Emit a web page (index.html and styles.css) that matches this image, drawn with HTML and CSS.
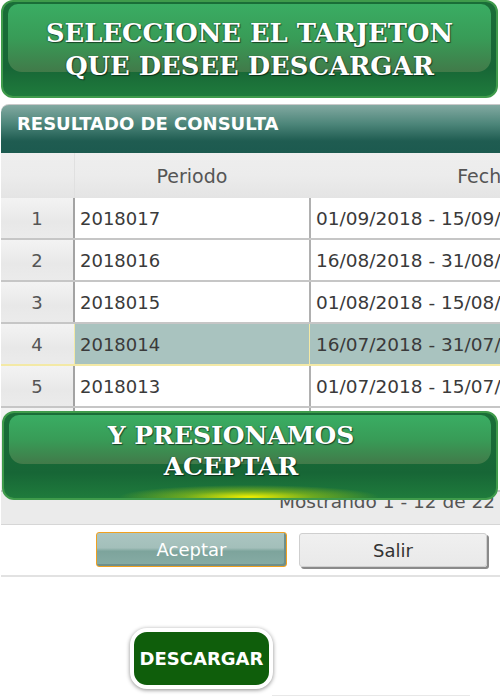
FILE: index.html
```html
<!DOCTYPE html>
<html lang="es">
<head>
<meta charset="utf-8">
<title>Tarjetón</title>
<link rel="stylesheet" href="styles.css">
</head>
<body>
<div class="page">
  <div class="gbanner top"><p>SELECCIONE EL TARJETON<br>QUE DESEE DESCARGAR</p></div>

  <section class="panel">
    <h1 class="panel-title">RESULTADO DE CONSULTA</h1>
    <div class="grid">
      <div class="row head"><div class="c num"></div><div class="c per">Periodo</div><div class="c fec">Fecha</div></div>
      <div class="row"><div class="c num">1</div><div class="c per">2018017</div><div class="c fec">01/09/2018 - 15/09/2018</div></div>
      <div class="row"><div class="c num">2</div><div class="c per">2018016</div><div class="c fec">16/08/2018 - 31/08/2018</div></div>
      <div class="row"><div class="c num">3</div><div class="c per">2018015</div><div class="c fec">01/08/2018 - 15/08/2018</div></div>
      <div class="row sel"><div class="c num">4</div><div class="c per">2018014</div><div class="c fec">16/07/2018 - 31/07/2018</div></div>
      <div class="row"><div class="c num">5</div><div class="c per">2018013</div><div class="c fec">01/07/2018 - 15/07/2018</div></div>
      <div class="row rest"><div class="c num"></div><div class="c per"></div><div class="c fec"></div></div>
    </div>
    <div class="pager">Mostrando 1 - 12 de 22</div>
    <div class="actions">
      <button class="btn ok">Aceptar</button>
      <button class="btn exit">Salir</button>
    </div>
  </section>

  <div class="dl-wrap"><button class="dl">DESCARGAR</button></div>
  <div class="rule"></div>

  <div class="gbanner overlay"><p>Y PRESIONAMOS<br>ACEPTAR</p></div>
</div>
</body>
</html>
```

FILE: styles.css
```css
html, body {
  margin: 0;
  padding: 0;
  background: #ffffff;
}
body {
  width: 500px;
  height: 700px;
  overflow: hidden;
  font-family: "DejaVu Sans", Roboto, sans-serif;
}
.page {
  position: relative;
  width: 500px;
  height: 700px;
  overflow: hidden;
}

/* green glossy banners */
.gbanner {
  position: relative;
  box-sizing: border-box;
  border: 2px solid #3f9b4b;
  border-radius: 12px;
  background: linear-gradient(#1a6e38, #176636 70%, #1f7b3c);
  overflow: hidden;
}
.gbanner::before {
  content: "";
  position: absolute;
  left: 5px;
  right: 5px;
  top: 2px;
  height: var(--gloss, 68px);
  border-radius: 10px 10px 14px 14px;
  background: linear-gradient(#3aad63, #389c57 50%, #417a49);
}
.gbanner p {
  position: relative;
  margin: 0;
  color: #ffffff;
  text-align: center;
  font-family: "DejaVu Serif", "Liberation Serif", serif;
  font-weight: bold;
  text-shadow: 1px 1px 1px rgba(0,0,0,0.55), -1px 0 1px rgba(0,0,0,0.25);
}
.gbanner.top {
  height: 98px;
  margin: 0 2px 0 1px;
  --gloss: 68px;
}
.gbanner.top p {
  padding-top: 15px;
  font-size: 25.8px;
  line-height: 33px;
}
.gbanner.overlay {
  position: absolute;
  top: 411px;
  left: 2px;
  width: 496px;
  height: 89px;
  --gloss: 49px;
  background:
    radial-gradient(ellipse 130px 12px at 245px 84px, rgba(240,240,0,1), rgba(200,225,0,0.45) 50%, rgba(30,120,50,0) 100%),
    linear-gradient(#1a6e38, #176636 70%, #1f7b3c);
}
.gbanner.overlay p {
  padding-top: 7px;
  padding-right: 38px;
  font-size: 25px;
  line-height: 31px;
}

/* result panel */
.panel {
  margin-top: 6px;
  margin-left: 1px;
}
.panel-title {
  margin: 0;
  height: 49px;
  box-sizing: border-box;
  border-top: 1px solid #c9c9c9;
  border-radius: 8px 0 0 0;
  padding: 7px 0 0 16px;
  background: linear-gradient(#82a9a1, #4c8579 40%, #1f5c51 75%, #1c5a4f);
  color: #ffffff;
  font-size: 18px;
  font-weight: bold;
  line-height: 24px;
}

.grid {
  width: 660px;
}
.row {
  display: grid;
  grid-template-columns: 74px 234px 352px;
  height: 42px;
  box-sizing: border-box;
  border-bottom: 2px solid #c6c6c6;
  font-size: 18px;
  color: #3a3a3a;
}
.c {
  display: flex;
  align-items: center;
  box-sizing: border-box;
  background: #ffffff;
  white-space: nowrap;
}
.c.num {
  justify-content: center;
  color: #555555;
  background: linear-gradient(#f3f3f3, #e8e8e8 60%, #ebebeb);
  border-right: 2px solid #a3a3a3;
}
.c.per {
  padding-left: 5px;
}
.c.fec {
  padding-left: 5px;
  border-left: 2px solid #b0b0b0;
  font-size: 18.5px;
}
.row.head {
  height: 45px;
  border-bottom: none;
  color: #555555;
  background: linear-gradient(#eeeeee, #ececec 50%, #e4e4e4);
}
.row.head .c {
  background: transparent;
  justify-content: center;
  padding-left: 0;
  border: none;
  font-size: 19px;
}
.row.head .c.num {
  border-right: 1px solid #e0e0e0;
}
.row.sel {
  border-bottom-color: #f3e9a6;
}
.row.sel .c.per,
.row.sel .c.fec {
  background: #a9c3bf;
}
.row.sel .c.fec {
  border-left: 1px solid #f3e9a6;
  padding-left: 6px;
}
.row.sel .c.num {
  border-right: 1px solid #f3e9a6;
  padding-right: 1px;
}
.row.rest {
  height: 84px;
}

.pager {
  height: 33px;
  box-sizing: border-box;
  border-bottom: 1px solid #d6d6d6;
  background: #ebebeb;
  text-align: right;
  padding-right: 5px;
  font-size: 18.5px;
  line-height: 20px;
  color: #555555;
  white-space: nowrap;
}

.actions {
  display: flex;
  justify-content: flex-end;
  align-items: flex-start;
  gap: 12px;
  height: 52px;
  box-sizing: border-box;
  padding: 7px 13px 0 0;
  border-bottom: 2px solid #e2e2e2;
}
.btn {
  height: 35px;
  margin: 0;
  font-family: "DejaVu Sans", Roboto, sans-serif;
  font-size: 18px;
  border-radius: 3px;
  padding: 0;
}
.btn.ok {
  width: 191px;
  color: #ffffff;
  border: 1px solid #f0a020;
  background: linear-gradient(#abc5c1, #a3bfba 45%, #7da49c 55%, #87aca5);
  box-shadow: inset -2px -2px 0 #6f8f8a;
}
.btn.exit {
  width: 188px;
  height: 34px;
  margin-top: 1px;
  color: #333333;
  border: 1px solid #cfcfcf;
  background: linear-gradient(#f0f0f0, #e9e9e9);
  box-shadow: 2px 2px 0 #8a8a8a;
}

.dl-wrap {
  padding: 51px 0 0 130px;
}
.dl {
  width: 143px;
  height: 61px;
  box-sizing: border-box;
  border: 4px solid #ffffff;
  border-radius: 17px;
  background: #0f5e0b;
  box-shadow: 0 1px 4px rgba(0,0,0,0.45);
  color: #ffffff;
  font-family: "DejaVu Sans", Roboto, sans-serif;
  font-weight: bold;
  font-size: 18px;
  padding: 0;
}
.rule {
  margin: 6px 0 0 272px;
  width: 198px;
  height: 1px;
  background: #e8e8e8;
}
```
